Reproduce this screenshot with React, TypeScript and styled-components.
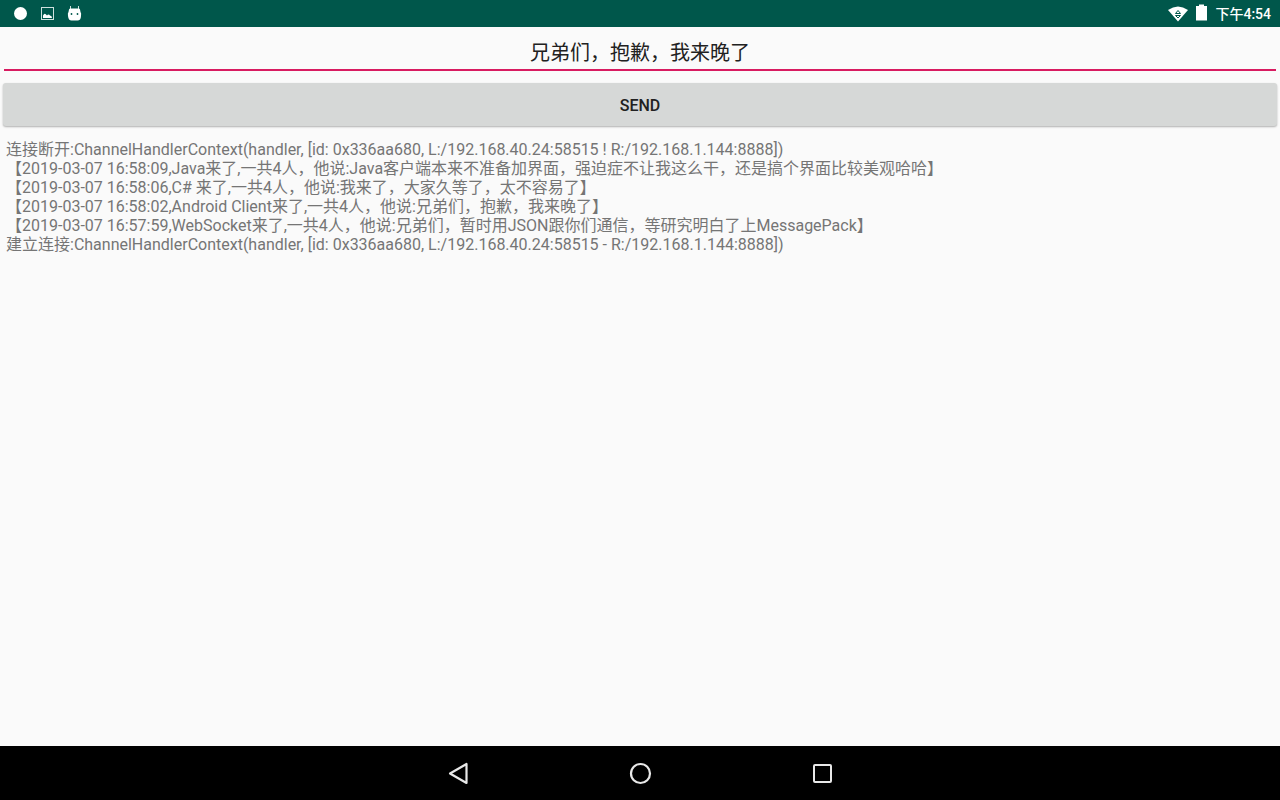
import React, { useState } from "react";
import styled, { createGlobalStyle } from "styled-components";

const GlobalStyle = createGlobalStyle`
  * { box-sizing: border-box; }
  body { margin: 0; background: #fafafa; font-family: Roboto, "Noto Sans CJK SC", sans-serif; }
`;

const Screen = styled.div`
  min-height: 100vh;
  display: flex;
  flex-direction: column;
`;

const StatusBar = styled.header`
  display: flex;
  justify-content: space-between;
  align-items: center;
  height: 27px;
  padding: 0 9px 0 13px;
  background: #00574b;
  color: #fff;
`;

const IconGroup = styled.div<{ $gap: number }>`
  display: flex;
  align-items: center;
  gap: ${(p) => p.$gap}px;
`;

const Clock = styled.time`
  font-size: 14px;
  line-height: 20px;
  font-weight: 500;
`;

const Main = styled.main`
  flex: 1;
  display: flex;
  flex-direction: column;
`;

const MessageInput = styled.input`
  height: 44px;
  margin: 0 4px;
  padding: 6px 0 0;
  border: 0;
  border-bottom: 2px solid #d81b60;
  border-radius: 0;
  outline: none;
  background: transparent;
  color: #212121;
  font: 400 20px/28px Roboto, "Noto Sans CJK SC", sans-serif;
  text-align: center;
`;

const SendButton = styled.button`
  height: 43px;
  margin: 12px 3px 0;
  padding: 2px 0 0;
  border: 0;
  border-radius: 3px;
  background: #d6d8d7;
  box-shadow: 0 1px 2px rgba(0, 0, 0, 0.3);
  color: #212121;
  font: 500 16px/20px Roboto, sans-serif;
  text-transform: uppercase;
`;

const Log = styled.ul`
  margin: 14px 6px 0;
  padding: 0;
  list-style: none;
  color: #757575;
  font-size: 16px;
  line-height: 19px;
`;

const NavBar = styled.nav`
  display: flex;
  justify-content: center;
  gap: 134px;
  height: 54px;
  background: #000;
`;

const NavButton = styled.button`
  display: flex;
  align-items: center;
  justify-content: center;
  width: 48px;
  padding: 0;
  border: 0;
  background: none;
  color: #e8e8e8;
`;

const messages = [
  "连接断开:ChannelHandlerContext(handler, [id: 0x336aa680, L:/192.168.40.24:58515 ! R:/192.168.1.144:8888])",
  "【2019-03-07 16:58:09,Java来了,一共4人，他说:Java客户端本来不准备加界面，强迫症不让我这么干，还是搞个界面比较美观哈哈】",
  "【2019-03-07 16:58:06,C# 来了,一共4人，他说:我来了，大家久等了，太不容易了】",
  "【2019-03-07 16:58:02,Android Client来了,一共4人，他说:兄弟们，抱歉，我来晚了】",
  "【2019-03-07 16:57:59,WebSocket来了,一共4人，他说:兄弟们，暂时用JSON跟你们通信，等研究明白了上MessagePack】",
  "建立连接:ChannelHandlerContext(handler, [id: 0x336aa680, L:/192.168.40.24:58515 - R:/192.168.1.144:8888])",
];

export default function App() {
  const [text, setText] = useState("兄弟们，抱歉，我来晚了");
  return (
    <Screen>
      <GlobalStyle />
      <StatusBar>
        <IconGroup $gap={12}>
          <svg width="15" height="15" viewBox="0 0 15 15"><circle cx="7.5" cy="7.5" r="6.500" fill="#fff" /></svg>
          <svg width="15" height="15" viewBox="0 0 15 15">
            <rect x="1.5" y="1.5" width="12" height="12" fill="none" stroke="#cfe0dd" />
            <path d="M3 12V9.500Q4.500 6.500 6 8.500L7 9.500Q8.500 7.500 10 9.500Q12 9.500 12 12Z" fill="#fff" />
          </svg>
          <svg width="15" height="18" viewBox="0 0 15 18">
            <path d="M3.500 1V4M11.500 1V4" stroke="#cfe0dd" />
            <path d="M2 4.500Q2 3.500 4 3.500H11Q13 3.500 13 4.500L13.500 7Q14.500 8 14 11Q13.800 15.500 10.500 15.500H4.500Q1.500 15.500 1 11Q0.500 8 1.500 7Z" fill="#fff" />
            <circle cx="4.500" cy="9" r="0.9" fill="#00574b" />
            <circle cx="10.500" cy="9" r="0.9" fill="#00574b" />
          </svg>
        </IconGroup>
        <IconGroup $gap={8}>
          <svg width="20" height="16" viewBox="0 0 20 16">
            <path d="M0 4Q10-3 20 4L10 15.500Z" fill="#fff" />
            <path d="M7.500 7.500L10 4.500L12.500 7.500ZM7.500 9.500H12.500L10 12Z" stroke="#00574b" fill="none" />
          </svg>
          <svg width="11" height="20" viewBox="0 0 11 20"><path d="M0 2H3V0.500H8V2H11V16.500H0Z" fill="#fff" /></svg>
          <Clock>下午4:54</Clock>
        </IconGroup>
      </StatusBar>
      <Main>
        <MessageInput aria-label="Message" value={text} onChange={(e) => setText(e.target.value)} />
        <SendButton type="button">Send</SendButton>
        <Log>{messages.map((m) => <li key={m}>{m}</li>)}</Log>
      </Main>
      <NavBar>
        <NavButton type="button" aria-label="Back">
          <svg width="24" height="24" viewBox="0 0 24 24"><path d="M20.500 3V22L4 12.500Z" fill="none" stroke="currentColor" strokeWidth="2.2" strokeLinejoin="round" /></svg>
        </NavButton>
        <NavButton type="button" aria-label="Home">
          <svg width="24" height="24" viewBox="0 0 24 24"><circle cx="12.500" cy="12.500" r="9.500" fill="none" stroke="currentColor" strokeWidth="2.2" /></svg>
        </NavButton>
        <NavButton type="button" aria-label="Recent apps">
          <svg width="24" height="24" viewBox="0 0 24 24"><rect x="4" y="4" width="17" height="17" rx="1" fill="none" stroke="currentColor" strokeWidth="2" /></svg>
        </NavButton>
      </NavBar>
    </Screen>
  );
}
